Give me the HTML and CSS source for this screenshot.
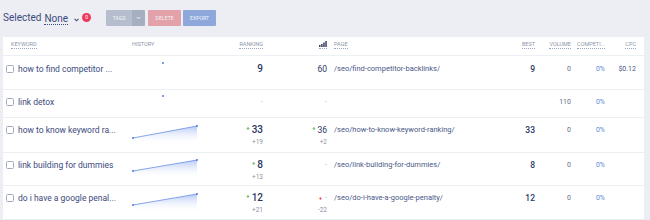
FILE: index.html
```html
<!DOCTYPE html>
<html>
<head>
<meta charset="utf-8">
<link rel="stylesheet" href="styles.css">
</head>
<body>
<div class="topbar">
  <span class="sel-label">Selected</span>
  <span class="sel-value">None</span>
  <svg class="chev" width="5" height="4" viewBox="0 0 5 4"><path d="M0.6 0.8 L2.5 2.8 L4.4 0.8" fill="none" stroke="#3d4a7e" stroke-width="1.1"/></svg>
  <span class="badge">0</span>
  <div class="btns">
    <div class="btn-group">
      <button class="btn btn-tags">TAGS</button>
      <button class="btn btn-caret"><svg width="5" height="4" viewBox="0 0 5 4"><path d="M0.8 1 L2.5 2.8 L4.2 1" fill="none" stroke="#eef0f5" stroke-width="1"/></svg></button>
    </div>
    <button class="btn btn-delete">DELETE</button>
    <button class="btn btn-export">EXPORT</button>
  </div>
</div>

<div class="table">
  <div class="row head">
    <div class="c c-kw"><span class="hd">KEYWORD</span></div>
    <div class="c c-hist"><span class="hd plain">HISTORY</span></div>
    <div class="c c-rank r"><span class="hd">RANKING</span></div>
    <div class="c c-pn r"><span class="hd icon"><svg width="8" height="6" viewBox="0 0 8 6"><rect x="0" y="4" width="1.5" height="2" fill="#3a4460"/><rect x="2.1" y="3" width="1.5" height="3" fill="#3a4460"/><rect x="4.2" y="1.5" width="1.5" height="4.5" fill="#3a4460"/><rect x="6.3" y="0" width="1.5" height="6" fill="#3a4460"/></svg></span></div>
    <div class="c c-page"><span class="hd">PAGE</span></div>
    <div class="c r"><span class="hd">BEST</span></div>
    <div class="c r"><span class="hd">VOLUME</span></div>
    <div class="c r"><span class="hd">COMPETI...</span></div>
    <div class="c r c-cpc"><span class="hd">CPC</span></div>
  </div>

  <div class="row r1">
    <div class="c c-kw"><span class="cb"></span><span class="kw">how to find competitor ...</span></div>
    <div class="c c-hist"><svg class="spark" width="70" height="30" viewBox="0 0 70 30"><circle cx="31" cy="7" r="0.9" fill="#3f6fe0"/></svg></div>
    <div class="c c-rank r"><div class="main"><span class="num">9</span></div></div>
    <div class="c c-pn r"><div class="main"><span class="pnum">60</span></div></div>
    <div class="c c-page"><span class="path">/seo/find-competitor-backlinks/</span></div>
    <div class="c r"><span class="best">9</span></div>
    <div class="c r"><span class="vol">0</span></div>
    <div class="c r"><span class="comp">0%</span></div>
    <div class="c r c-cpc"><span class="cpc">$0.12</span></div>
  </div>

  <div class="row r2">
    <div class="c c-kw"><span class="cb"></span><span class="kw">link detox</span></div>
    <div class="c c-hist"><svg class="spark" width="70" height="30" viewBox="0 0 70 30"><circle cx="31" cy="6" r="0.9" fill="#3f6fe0"/></svg></div>
    <div class="c c-rank r"><div class="main"><span class="dash">-</span></div></div>
    <div class="c c-pn r"><div class="main"><span class="dash">-</span></div></div>
    <div class="c c-page"></div>
    <div class="c r"></div>
    <div class="c r"><span class="vol">110</span></div>
    <div class="c r"><span class="comp">0%</span></div>
    <div class="c r c-cpc"></div>
  </div>

  <div class="row r3">
    <div class="c c-kw"><span class="cb"></span><span class="kw">how to know keyword ra...</span></div>
    <div class="c c-hist"><svg class="spark" width="70" height="30" viewBox="0 0 70 30"><defs><linearGradient id="g1" x1="0" y1="0" x2="0" y2="1"><stop offset="0" stop-color="#9db6f0" stop-opacity="0.75"/><stop offset="1" stop-color="#ffffff" stop-opacity="0"/></linearGradient></defs><polygon points="1,20 65,8 65,26 1,26" fill="url(#g1)"/><line x1="1" y1="20" x2="65" y2="8" stroke="#6b8fe6" stroke-width="0.8"/><circle cx="1" cy="20" r="0.9" fill="#3f6fe0"/><circle cx="65" cy="8" r="0.9" fill="#3f6fe0"/></svg></div>
    <div class="c c-rank r"><div class="main"><span class="up">+</span><span class="num">33</span></div><div class="delta">+19</div></div>
    <div class="c c-pn r"><div class="main"><span class="up">+</span><span class="pnum">36</span></div><div class="delta">+2</div></div>
    <div class="c c-page"><span class="path">/seo/how-to-know-keyword-ranking/</span></div>
    <div class="c r"><span class="best">33</span></div>
    <div class="c r"><span class="vol">0</span></div>
    <div class="c r"><span class="comp">0%</span></div>
    <div class="c r c-cpc"></div>
  </div>

  <div class="row r4">
    <div class="c c-kw"><span class="cb"></span><span class="kw">link building for dummies</span></div>
    <div class="c c-hist"><svg class="spark" width="70" height="30" viewBox="0 0 70 30"><defs><linearGradient id="g2" x1="0" y1="0" x2="0" y2="1"><stop offset="0" stop-color="#9db6f0" stop-opacity="0.75"/><stop offset="1" stop-color="#ffffff" stop-opacity="0"/></linearGradient></defs><polygon points="1,18 65,7 65,25 1,25" fill="url(#g2)"/><line x1="1" y1="18" x2="65" y2="7" stroke="#6b8fe6" stroke-width="0.8"/><circle cx="1" cy="18" r="0.9" fill="#3f6fe0"/><circle cx="65" cy="7" r="0.9" fill="#3f6fe0"/></svg></div>
    <div class="c c-rank r"><div class="main"><span class="up">+</span><span class="num">8</span></div><div class="delta">+13</div></div>
    <div class="c c-pn r"><div class="main"><span class="dash">-</span></div></div>
    <div class="c c-page"><span class="path">/seo/link-building-for-dummies/</span></div>
    <div class="c r"><span class="best">8</span></div>
    <div class="c r"><span class="vol">0</span></div>
    <div class="c r"><span class="comp">0%</span></div>
    <div class="c r c-cpc"></div>
  </div>

  <div class="row r5">
    <div class="c c-kw"><span class="cb"></span><span class="kw">do i have a google penal...</span></div>
    <div class="c c-hist"><svg class="spark" width="70" height="30" viewBox="0 0 70 30"><defs><linearGradient id="g3" x1="0" y1="0" x2="0" y2="1"><stop offset="0" stop-color="#9db6f0" stop-opacity="0.75"/><stop offset="1" stop-color="#ffffff" stop-opacity="0"/></linearGradient></defs><polygon points="1,19 65,8 65,26 1,26" fill="url(#g3)"/><line x1="1" y1="19" x2="65" y2="8" stroke="#6b8fe6" stroke-width="0.8"/><circle cx="1" cy="19" r="0.9" fill="#3f6fe0"/><circle cx="65" cy="8" r="0.9" fill="#3f6fe0"/></svg></div>
    <div class="c c-rank r"><div class="main"><span class="up">+</span><span class="num">12</span></div><div class="delta">+21</div></div>
    <div class="c c-pn r"><div class="main"><span class="down">+</span><span class="dash">-</span></div><div class="delta">-22</div></div>
    <div class="c c-page"><span class="path">/seo/do-i-have-a-google-penalty/</span></div>
    <div class="c r"><span class="best">12</span></div>
    <div class="c r"><span class="vol">0</span></div>
    <div class="c r"><span class="comp">0%</span></div>
    <div class="c r c-cpc"></div>
  </div>
</div>
</body>
</html>
```

FILE: styles.css
```css
* { box-sizing: border-box; }
html, body {
  margin: 0;
  padding: 0;
  background: #eceef3;
  font-family: Roboto, "Liberation Sans", sans-serif;
  width: 650px;
  height: 220px;
  overflow: hidden;
}

.topbar {
  height: 37px;
  display: flex;
  align-items: center;
  padding-left: 3px;
  padding-bottom: 2px;
}
.sel-label {
  font-size: 10px;
  color: #3d4a7e;
  margin-right: 3px;
}
.sel-value {
  font-size: 10px;
  color: #3d4a7e;
  border-bottom: 1px dotted #3d4a7e;
  line-height: 11px;
  margin-right: 6px;
  margin-top: 2px;
}
.chev { margin-top: 4px; margin-right: 3px; }
.badge {
  width: 9px;
  height: 9px;
  border-radius: 50%;
  background: #f0385c;
  color: #fff;
  font-size: 5px;
  line-height: 9px;
  text-align: center;
  margin-top: -1px;
}
.btns {
  display: flex;
  margin-left: 15px;
  margin-top: 1px;
}
.btn-group { display: flex; margin-right: 3px; }
.btn {
  border: none;
  padding: 0;
  height: 16px;
  font-family: Roboto, "Liberation Sans", sans-serif;
  font-size: 5px;
  color: #f3f4f8;
  letter-spacing: 0.1px;
  display: flex;
  align-items: center;
  justify-content: center;
}
.btn-tags { width: 26px; background: #b6becd; border-radius: 1px 0 0 1px; }
.btn-caret { width: 13px; background: #a6afc0; border-radius: 0 1px 1px 0; }
.btn-delete { width: 33px; background: #e3a1a9; margin-right: 2px; border-radius: 1px; }
.btn-export { width: 33px; background: #8ea8dc; border-radius: 1px; }

.table {
  background: #fff;
  margin-left: 3px;
  width: 641px;
}
.row {
  display: grid;
  grid-template-columns: 126px 81px 55px 64px 171px 37px 36px 34px 37px;
  border-bottom: 1px solid #eceff4;
  align-items: start;
}
.row.head { height: 19px; align-items: center; padding-bottom: 2px; }
.r1 { height: 34px; }
.r2 { height: 28px; }
.r3 { height: 35px; }
.r4 { height: 33px; }
.r5 { height: 34px; }

.c {
  padding-top: 6px;
  line-height: 12px;
  display: flex;
  flex-direction: column;
  align-items: flex-start;
  white-space: nowrap;
  overflow: hidden;
}
.r1 .c { padding-top: 7px; }
.head .c { padding-top: 0; }
.c.r { align-items: flex-end; padding-right: 2px; }
.c-kw { flex-direction: row; align-items: center; padding-left: 3px; height: 24px; }
.head .c-kw { height: auto; padding-left: 8px; }
.c-hist { padding-left: 3px; }
.row:not(.head) .c-hist { padding-top: 0; }
.c-page { padding-left: 5px; }
.c.c-cpc { padding-right: 8px; }

.hd {
  font-size: 5.5px;
  line-height: 7px;
  color: #8e96a8;
  border-bottom: 1px dotted #9aa4c2;
  text-transform: uppercase;
}
.hd.plain { border-bottom-color: transparent; }
.hd.icon { line-height: 0; padding-bottom: 1px; }

.cb {
  width: 8px;
  height: 8px;
  border: 1px solid #a3abbc;
  border-radius: 1.5px;
  background: #fff;
  margin-right: 4px;
  flex: none;
}
.kw { font-size: 8.5px; color: #3d4a7e; }
.row .c-kw { padding-top: 0; }
.r1 .c-kw { height: 26px; }

.spark { display: block; }

.main { display: flex; align-items: center; }
.num { font-size: 10px; font-weight: 500; color: #2b3763; }
.pnum { font-size: 8.5px; color: #2b3763; }
.up, .down {
  font-size: 6px;
  line-height: 6px;
  font-weight: 700;
  color: #4cb050;
  margin-right: 2px;
  align-self: flex-start;
  margin-top: 1px;
}
.down { color: #e5404f; margin-right: 3px; margin-top: 3px; }
.delta { font-size: 6.5px; color: #8a93a6; line-height: 12px; }
.dash { font-size: 7px; color: #b5bccb; }
.path { font-size: 7.5px; color: #4a5787; }
.best { font-size: 8.5px; font-weight: 500; color: #2b3763; }
.vol { font-size: 7px; color: #646d86; }
.comp { font-size: 7px; color: #5b8ad6; }
.cpc { font-size: 7px; color: #4a5680; }
```
